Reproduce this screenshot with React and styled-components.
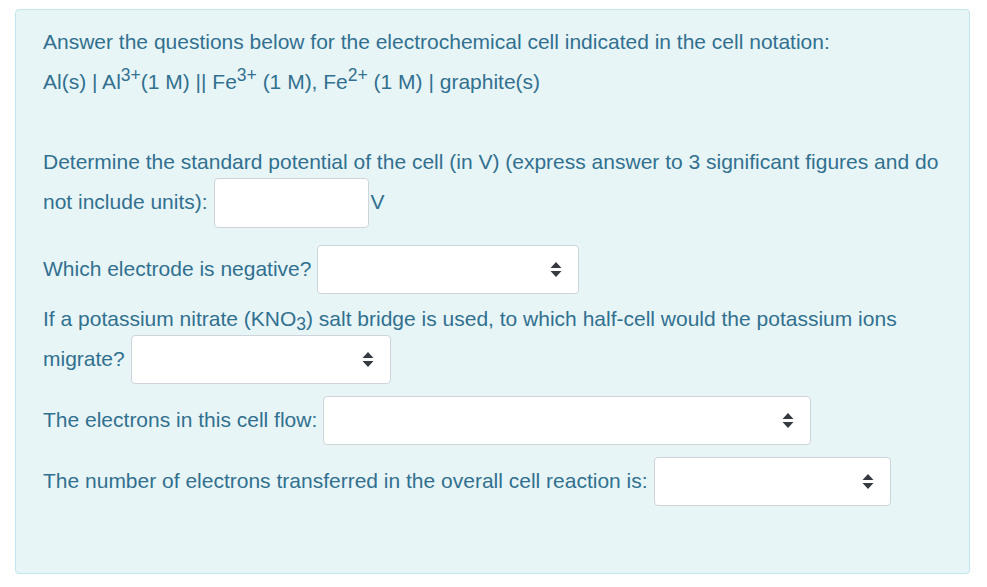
import React from "react";
import styled, { createGlobalStyle } from "styled-components";

const Global = createGlobalStyle`
  html, body { margin: 0; padding: 0; background: #ffffff; }
  body { font-family: "Liberation Sans", Arial, sans-serif; }
`;

const Page = styled.div`
  padding: 9px 17px 0 15px;
`;

const Panel = styled.div`
  box-sizing: border-box;
  height: 565px;
  background: #e8f5f7;
  border: 1px solid #c3e5ec;
  border-radius: 4px;
  padding: 12px 27px 0 27px;
  color: #31708f;
  font-size: 21px;
  line-height: 40px;
`;

const Para = styled.p`
  margin: ${(p) => p.$top || 0}px 0 0 0;
`;

const Sup = styled.sup`
  font-size: 17.5px;
  line-height: 0;
  vertical-align: 8px;
`;

const Sub = styled.sub`
  font-size: 17.5px;
  line-height: 0;
  vertical-align: -4px;
`;

const TextInput = styled.input`
  box-sizing: border-box;
  width: ${(p) => p.$w}px;
  height: 50px;
  margin: -7px 0 -7px 6px;
  vertical-align: middle;
  border: 1px solid #ced4da;
  border-radius: 4px;
  background: #ffffff;
  padding: 0 12px;
  font: inherit;
`;

const SelectBox = styled.span`
  box-sizing: border-box;
  display: inline-flex;
  align-items: center;
  justify-content: flex-end;
  width: ${(p) => p.$w}px;
  height: 49px;
  margin: -8px 0 -6px 6px;
  vertical-align: middle;
  border: 1px solid #ced4da;
  border-radius: 4px;
  background: #ffffff;
  padding-right: 16px;
`;

const Unit = styled.span`
  margin-left: 2px;
`;

const Arrows = () => (
  <svg width="12" height="15" viewBox="0 0 12 15">
    <path d="M6 0 L11.5 6 H0.5 Z M6 15 L11.5 9 H0.5 Z" fill="#343a40" />
  </svg>
);

const Select = ({ w }) => (
  <SelectBox $w={w}>
    <Arrows />
  </SelectBox>
);

export default function App() {
  return (
    <>
      <Global />
      <Page>
        <Panel>
          <Para>
            Answer the questions below for the electrochemical cell indicated in the cell notation:
            <br />
            Al(s) | Al<Sup>3+</Sup>(1 M) || Fe<Sup>3+</Sup> (1 M), Fe<Sup>2+</Sup> (1 M) | graphite(s)
          </Para>
          <Para $top={40}>
            Determine the standard potential of the cell (in V) (express answer to 3 significant figures and do not include units):
            <TextInput $w={155} type="text" />
            <Unit>V</Unit>
          </Para>
          <Para $top={27}>
            Which electrode is negative?
            <Select w={262} />
          </Para>
          <Para $top={10}>
            If a potassium nitrate (KNO<Sub>3</Sub>) salt bridge is used, to which half-cell would the potassium ions migrate?
            <Select w={260} />
          </Para>
          <Para $top={21}>
            The electrons in this cell flow:
            <Select w={488} />
          </Para>
          <Para $top={21}>
            The number of electrons transferred in the overall cell reaction is:
            <Select w={237} />
          </Para>
        </Panel>
      </Page>
    </>
  );
}
